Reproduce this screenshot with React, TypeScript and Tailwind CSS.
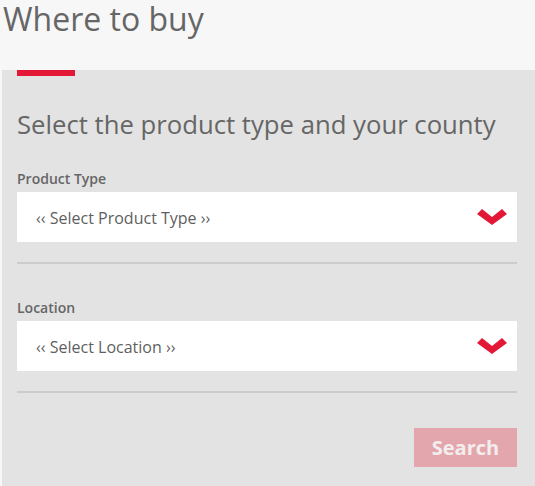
export default function App() {
  const font = { fontFamily: '"Open Sans", "Liberation Sans", sans-serif' };
  const Chevron = () => (
    <svg width="30" height="16" viewBox="0 0 30 16" className="shrink-0">
      <polygon points="5,0 15,8 25,0 30,5 15,16 0,5" fill="#e31837" />
    </svg>
  );
  const Select = ({ text }: { text: string }) => (
    <div className="flex h-[50px] items-center justify-between bg-white pl-[19px] pr-[10px]">
      <span className="text-[16px] leading-[20px] text-[#5f5f5f] pt-[2px]">{text}</span>
      <Chevron />
    </div>
  );
  return (
    <div className="h-[486px] w-[535px] overflow-hidden bg-[#f7f7f7]" style={font}>
      <div className="h-[70px] pl-[3px] pt-[2px]">
        <h1 className="text-[32px] leading-[34px] text-[#666666]">Where to buy</h1>
      </div>
      <div className="ml-[2px] h-[416px] bg-[#e3e3e3] pl-[15px] pr-[18px]">
        <div className="h-[6px] w-[58px] bg-[#e31837]" />
        <h2 className="mt-[34px] text-[25.7px] leading-[30px] text-[#666666]">
          Select the product type and your county
        </h2>
        <div className="mt-[29px] text-[14px] font-semibold leading-[20px] text-[#666666]">Product Type</div>
        <div className="mt-[3px]">
          <Select text="‹‹ Select Product Type ››" />
        </div>
        <div className="mt-[20px] h-[2px] bg-[#cccccc]" />
        <div className="mt-[34px] text-[14px] font-semibold leading-[20px] text-[#666666]">Location</div>
        <div className="mt-[3px]">
          <Select text="‹‹ Select Location ››" />
        </div>
        <div className="mt-[20px] h-[2px] bg-[#cccccc]" />
        <div className="mt-[35px] flex justify-end">
          <button className="h-[39px] w-[103px] bg-[#e4a6ad] text-[20px] font-bold text-[#f3eeee]">
            Search
          </button>
        </div>
      </div>
    </div>
  );
}
